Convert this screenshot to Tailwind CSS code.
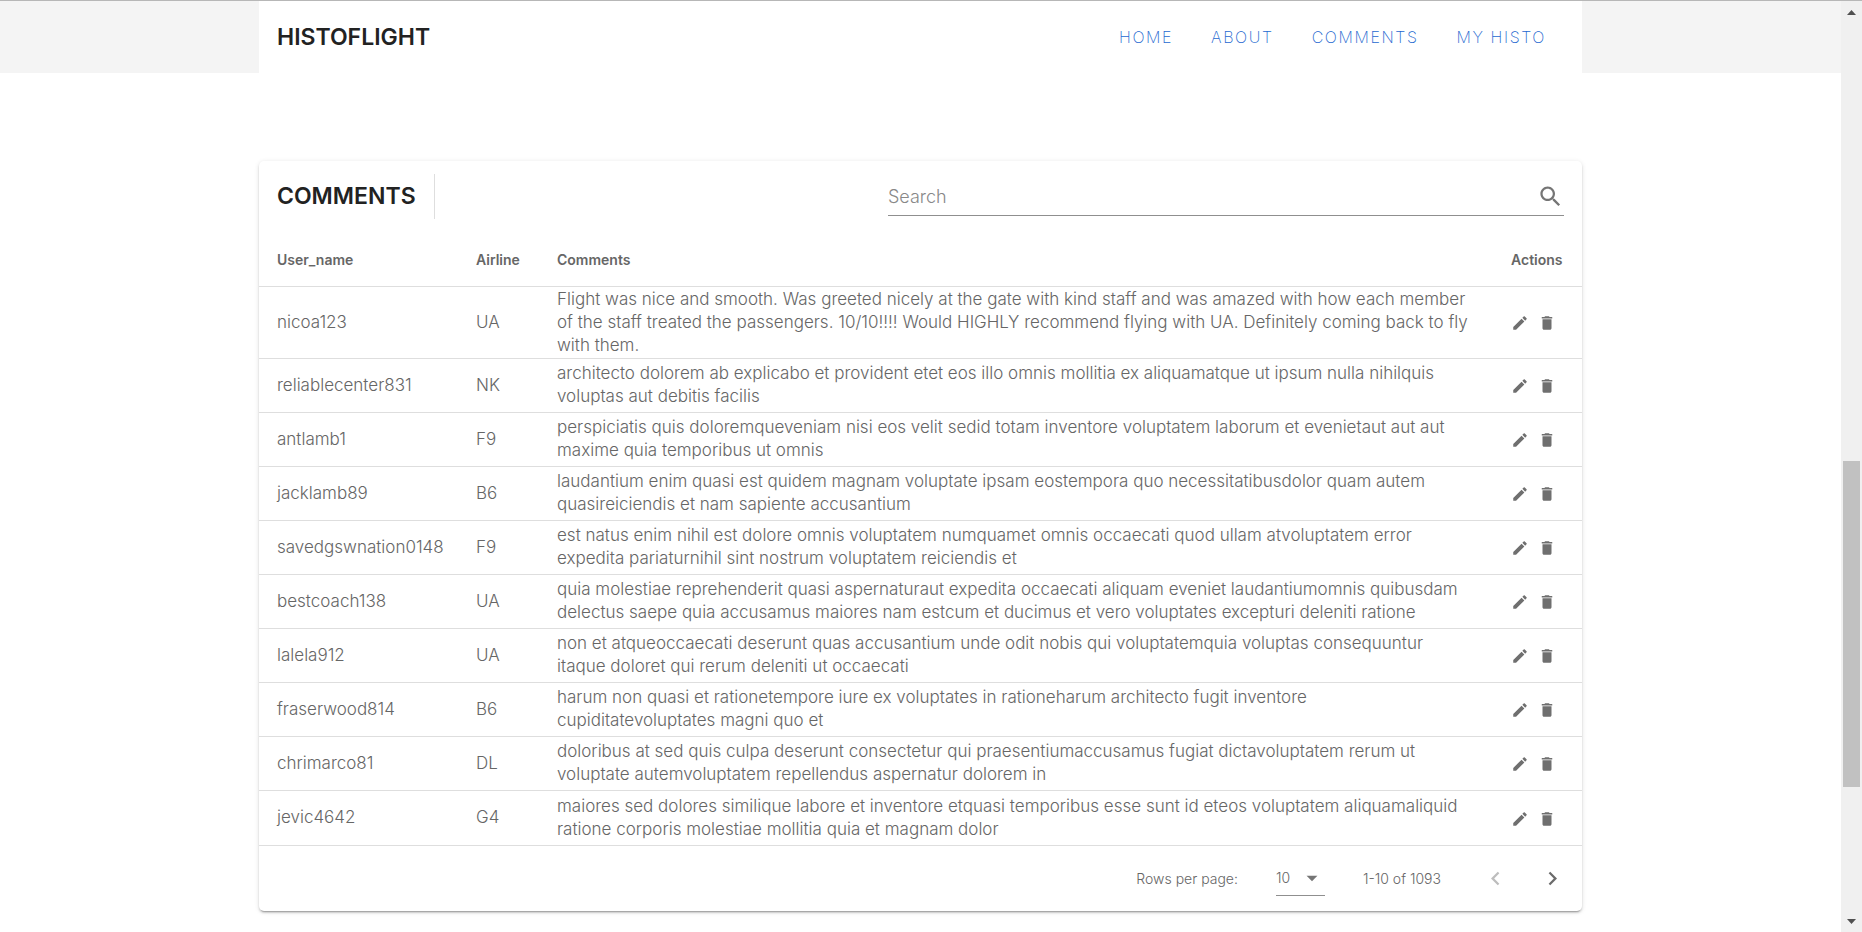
<!DOCTYPE html>
<html lang="en">
<head>
<meta charset="utf-8">
<title>Histoflight</title>
<script src="https://cdn.jsdelivr.net/npm/@tailwindcss/browser@4"></script>
</head>
<body class="flex min-h-screen border-t border-[#b7b7b7] bg-white font-['Inter',sans-serif] font-light text-[#666]">
<svg class="hidden" aria-hidden="true">
  <symbol id="edit" viewBox="0 0 24 24"><path d="M3 17.25V21h3.75L17.81 9.94l-3.75-3.75L3 17.25zM20.71 7.04c.39-.39.39-1.02 0-1.41l-2.34-2.34c-.39-.39-1.02-.39-1.41 0l-1.83 1.83 3.75 3.75 1.83-1.83z"/></symbol>
  <symbol id="trash" viewBox="0 0 24 24"><path d="M6 19c0 1.1.9 2 2 2h8c1.1 0 2-.9 2-2V7H6v12zM19 4h-3.5l-1-1h-5l-1 1H5v2h14V4z"/></symbol>
</svg>
<div class="min-w-0 flex-1">
  <header class="bg-[#f4f4f4]">
    <div class="mx-auto flex h-[72px] max-w-[1323px] items-center justify-between bg-white pr-9 pl-[18px]">
      <div class="text-[23px] font-semibold text-[#222]">HISTOFLIGHT</div>
      <nav class="flex gap-[38px] text-base font-extralight tracking-widest text-[#2468d0]">
        <a href="#home">HOME</a><a href="#about">ABOUT</a><a href="#comments">COMMENTS</a><a href="#histo">MY HISTO</a>
      </nav>
    </div>
  </header>
  <main id="comments" class="mx-auto mt-[88px] max-w-[1323px] rounded-[5px] bg-white shadow-[0_3px_1px_-2px_rgba(0,0,0,0.2),0_2px_2px_0_rgba(0,0,0,0.14),0_1px_5px_0_rgba(0,0,0,0.12)]">
    <div class="flex h-[73px] items-start justify-between px-[18px] pt-[13px]">
      <h1 class="flex h-[45px] items-center border-r border-[#dedede] pr-[18px] text-[23px] font-semibold text-[#222]">COMMENTS</h1>
      <label class="flex h-[42px] w-[676px] items-center border-b border-[#8f8f8f] pt-1">
        <input type="search" placeholder="Search" aria-label="Search" class="min-w-0 flex-1 text-lg font-light outline-none placeholder:text-[#888]">
        <svg class="size-[27px] fill-[#757575]" viewBox="0 0 24 24"><path d="M15.5 14h-.79l-.28-.27C15.41 12.59 16 11.11 16 9.5 16 5.91 13.09 3 9.5 3S3 5.91 3 9.5 5.91 16 9.5 16c1.61 0 3.09-.59 4.23-1.57l.27.28v.79l5 4.99L20.49 19l-4.99-5zm-6 0C7.01 14 5 11.99 5 9.5S7.01 5 9.5 5 14 7.01 14 9.5 11.99 14 9.5 14z"/></svg>
      </label>
    </div>
    <table class="w-full table-fixed border-collapse text-left text-[17px] leading-[23px]">
      <colgroup><col class="w-[217px]"><col class="w-[81px]"><col><col class="w-[71px]"></colgroup>
      <thead>
        <tr class="h-[52px] border-b border-[#dedede] text-[14px] text-[#666]">
          <th class="pl-[18px] font-semibold">User_name</th><th class="font-semibold">Airline</th><th class="font-semibold">Comments</th><th class="font-semibold whitespace-nowrap">Actions</th>
        </tr>
      </thead>
      <tbody id="rows"></tbody>
    </table>
    <div class="flex h-[65px] items-center justify-end pr-4 text-[14px]">
      <label for="per-page" class="mr-[38px]">Rows per page:</label>
      <div class="relative mr-[38px] flex h-[36px] w-[49px] items-center border-b border-[#8f8f8f]">
        <select id="per-page" class="w-full appearance-none outline-none"><option>10</option><option>25</option><option>50</option></select>
        <svg class="pointer-events-none absolute right-0 size-[26px] fill-[#757575]" viewBox="0 0 24 24"><path d="M7 10l5 5 5-5z"/></svg>
      </div>
      <span class="mr-[41px]">1-10 of 1093</span>
      <button type="button" disabled aria-label="Previous page" class="mr-[30px]"><svg class="size-[27px] fill-[#bdbdbd]" viewBox="0 0 24 24"><path d="M15.41 7.41L14 6l-6 6 6 6 1.41-1.41L10.83 12z"/></svg></button>
      <button type="button" aria-label="Next page"><svg class="size-[27px] fill-[#6b6b6b]" viewBox="0 0 24 24"><path d="M10 6L8.59 7.41 13.17 12l-4.58 4.59L10 18l6-6z"/></svg></button>
    </div>
  </main>
</div>
<aside aria-hidden="true" class="flex w-[21px] flex-col items-center bg-[#f0f0f0] px-0.5 pt-[9px] pb-2">
  <svg class="h-[5px] w-[9px] fill-[#505050]" viewBox="0 0 9 5"><path d="M0 5L4.500 0L9 5z"/></svg>
  <div class="grow-[446]"></div>
  <div class="w-full grow-[326] bg-[#c1c1c1]"></div>
  <div class="grow-[132]"></div>
  <svg class="h-[5px] w-[9px] fill-[#505050]" viewBox="0 0 9 5"><path d="M0 0L4.500 5L9 0z"/></svg>
</aside>
<script>
const data = [
  ["nicoa123","UA","Flight was nice and smooth. Was greeted nicely at the gate with kind staff and was amazed with how each member|of the staff treated the passengers. 10/10!!!! Would HIGHLY recommend flying with UA. Definitely coming back to fly|with them."],
  ["reliablecenter831","NK","architecto dolorem ab explicabo et provident etet eos illo omnis mollitia ex aliquamatque ut ipsum nulla nihilquis|voluptas aut debitis facilis"],
  ["antlamb1","F9","perspiciatis quis doloremqueveniam nisi eos velit sedid totam inventore voluptatem laborum et evenietaut aut aut|maxime quia temporibus ut omnis"],
  ["jacklamb89","B6","laudantium enim quasi est quidem magnam voluptate ipsam eostempora quo necessitatibusdolor quam autem|quasireiciendis et nam sapiente accusantium"],
  ["savedgswnation0148","F9","est natus enim nihil est dolore omnis voluptatem numquamet omnis occaecati quod ullam atvoluptatem error|expedita pariaturnihil sint nostrum voluptatem reiciendis et"],
  ["bestcoach138","UA","quia molestiae reprehenderit quasi aspernaturaut expedita occaecati aliquam eveniet laudantiumomnis quibusdam|delectus saepe quia accusamus maiores nam estcum et ducimus et vero voluptates excepturi deleniti ratione"],
  ["lalela912","UA","non et atqueoccaecati deserunt quas accusantium unde odit nobis qui voluptatemquia voluptas consequuntur|itaque doloret qui rerum deleniti ut occaecati"],
  ["fraserwood814","B6","harum non quasi et rationetempore iure ex voluptates in rationeharum architecto fugit inventore|cupiditatevoluptates magni quo et"],
  ["chrimarco81","DL","doloribus at sed quis culpa deserunt consectetur qui praesentiumaccusamus fugiat dictavoluptatem rerum ut|voluptate autemvoluptatem repellendus aspernatur dolorem in"],
  ["jevic4642","G4","maiores sed dolores similique labore et inventore etquasi temporibus esse sunt id eteos voluptatem aliquamaliquid|ratione corporis molestiae mollitia quia et magnam dolor"]
];
document.getElementById("rows").innerHTML = data.map(([user, airline, text]) => `
  <tr class="h-[54px] border-b border-[#dedede] last:h-[55px]">
    <td class="pl-[18px]">${user}</td><td>${airline}</td>
    <td class="py-px whitespace-nowrap">${text.replaceAll("|", "<br>")}</td>
    <td><div class="flex gap-[9px] pt-0.5"><button type="button" aria-label="Edit comment by ${user}"><svg class="size-[18px] fill-[#6f6f6f]"><use href="#edit"/></svg></button><button type="button" aria-label="Delete comment by ${user}"><svg class="size-[18px] fill-[#6f6f6f]"><use href="#trash"/></svg></button></div></td>
  </tr>`).join("");
</script>
</body>
</html>
